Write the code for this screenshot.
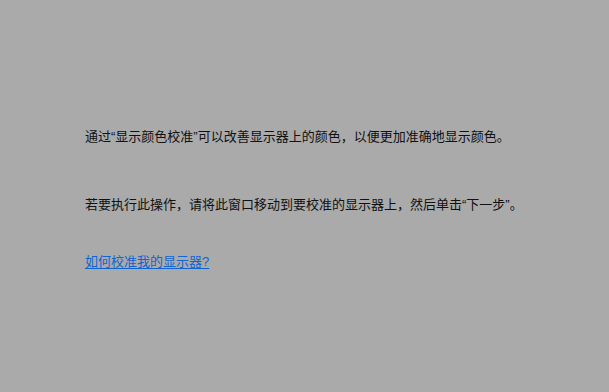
import React from 'react';

const App = (): React.ReactNode => {
  return (
    <div
      lang="zh-CN"
      className="w-[609px] h-[392px] bg-[#aaaaaa] pl-[85px] pt-[128px] text-[13px] leading-[18px] text-[#111111]"
      style={{ fontFamily: '"Liberation Sans", "Noto Sans CJK SC", sans-serif' }}
    >
      <p>通过“显示颜色校准”可以改善显示器上的颜色，以便更加准确地显示颜色。</p>
      <p className="mt-[50px]">若要执行此操作，请将此窗口移动到要校准的显示器上，然后单击“下一步”。</p>
      <a href="#" className="block mt-[39px] w-fit text-[#0f66d0] underline underline-offset-2">
        如何校准我的显示器?
      </a>
    </div>
  );
};

export default App;
